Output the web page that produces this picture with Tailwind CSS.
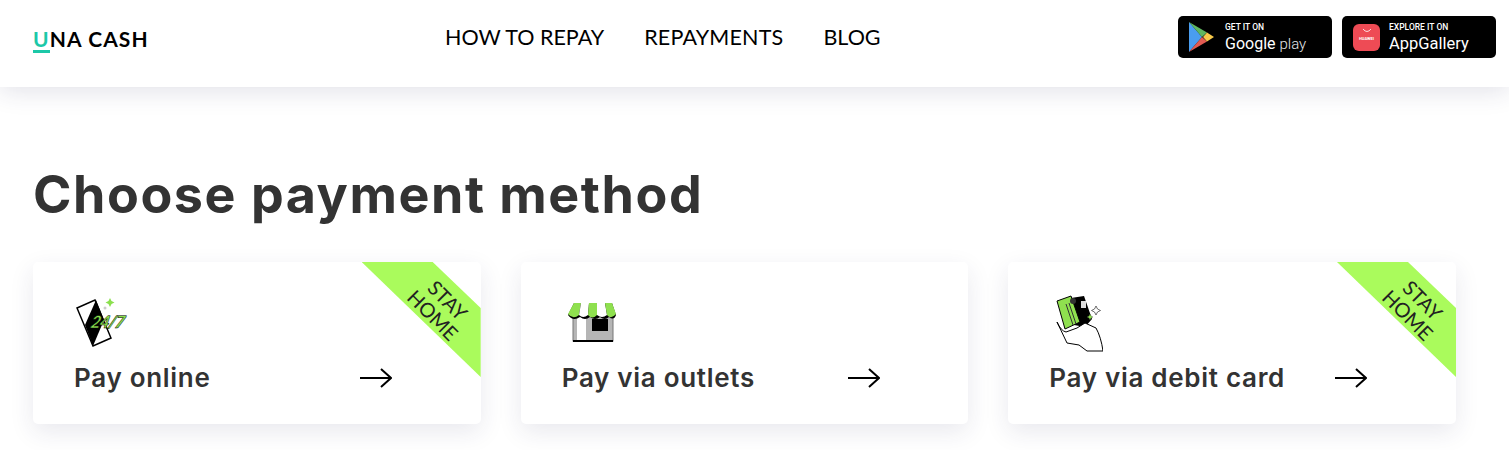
<!DOCTYPE html>
<html><head><meta charset="utf-8">
<script src="https://cdn.jsdelivr.net/npm/@tailwindcss/browser@4"></script>
</head>
<body class="bg-white overflow-hidden font-['Lato',sans-serif]">
<div class="w-[1509px] h-[450px] overflow-hidden">
<header class="h-[87px] bg-white flex items-start shadow-[0_4px_24px_rgba(40,40,90,0.14)] relative">
  <a class="w-[445px] pl-[33px] pt-[26px] text-[21px] leading-[26px] font-bold text-black tracking-[1.1px] font-['Lato',sans-serif] whitespace-nowrap"><span class="text-[#1cc8a8] border-b-[3px] border-[#1cc8a8] inline-block leading-[23px]">U</span>NA CASH</a>
  <nav class="flex gap-10 pt-[24px] text-[21.5px] leading-[26px] text-black whitespace-nowrap">
    <a>HOW TO REPAY</a><a class="tracking-[0.2px]">REPAYMENTS</a><a>BLOG</a>
  </nav>
  <div class="ml-auto flex gap-[10px] pt-[16px] pr-[13px] text-white font-['Roboto',sans-serif]">
    <div class="w-[154px] h-[42px] bg-black rounded-[5px] flex items-center pl-[10px]">
      <svg width="28" height="36" viewBox="0 0 28 36" class="mr-[9px]">
        <path d="M1 3 L14 18 L1 33Z" fill="#4a9df0"/>
        <path d="M1 3 L19 13.5 L14 18Z" fill="#5fb760"/>
        <path d="M1 33 L19 22.5 L14 18Z" fill="#e25b52"/>
        <path d="M19 13.5 L26 18 L19 22.5 L15 18Z" fill="#f7c84a"/>
      </svg>
      <div class="flex flex-col">
        <span class="text-[8.5px] leading-[10px] mt-[1px] font-medium">GET IT ON</span>
        <span class="text-[16px] leading-[20px] mt-[2px] whitespace-nowrap">Google <span class="font-light text-[15px] text-gray-200">play</span></span>
      </div>
    </div>
    <div class="w-[154px] h-[42px] bg-black rounded-[5px] flex items-center pl-[11px]">
      <div class="w-[27px] h-[27px] rounded-[6px] bg-[#ee4b55] mr-[9px] flex flex-col items-center pt-[4px]">
        <svg width="10" height="5" viewBox="0 0 10 5"><path d="M1 1 Q5 6 9 1" stroke="#fff" stroke-width="0.8" fill="none"/></svg>
        <span class="text-[4px] leading-[5px] mt-[3px] font-bold">HUAWEI</span>
      </div>
      <div class="flex flex-col">
        <span class="text-[8.5px] leading-[10px] mt-[1px] font-medium whitespace-nowrap">EXPLORE IT ON</span>
        <span class="text-[16.5px] leading-[20px] mt-[2px] whitespace-nowrap">AppGallery</span>
      </div>
    </div>
  </div>
</header>
<main class="px-[33px]">
  <h1 class="mt-[75px] text-[52px] leading-[66px] font-bold text-[#333] tracking-[1.55px] font-['Inter',sans-serif] whitespace-nowrap">Choose payment method</h1>
  <div class="grid grid-cols-3 gap-10 mt-[34px] w-[1423px]">

    <div class="relative h-[162px] bg-white rounded-[5px] shadow-[0_8px_24px_rgba(40,40,90,0.1)] overflow-hidden pl-[41px] pt-[33px]">
      <div class="absolute top-0 right-0 w-[119px] h-[115px] bg-[#aafb5c] [clip-path:polygon(0_0,71px_0,100%_46px,100%_100%)]"></div>
      <div class="absolute top-[23px] right-[-5px] w-[90px] rotate-45 text-center text-[20px] leading-[21px] text-[#222] pt-[2px]">STAY<br>HOME</div>
      <svg width="54" height="52" viewBox="0 0 54 52" class="block">
        <path d="M3 13 L21 5 L37 43 L19 51Z" fill="#fff" stroke="#000" stroke-width="1.5"/>
        <path d="M22 5 L30 25 L19 51 L11 30Z" fill="#000"/>
        <g transform="skewX(-12)">
          <text x="23" y="33" font-family="Lato" font-style="italic" font-weight="900" font-size="17" fill="#8be04e" stroke="#000" stroke-width="0.5" letter-spacing="-1">24/7</text>
        </g>
        <path d="M36 3l1.500 3 3 1.500-3 1.500-1.500 3-1.500-3-3-1.500 3-1.500z" fill="#8be04e"/>
        <circle cx="31" cy="13" r="1.500" fill="#ccc"/>
      </svg>
      <div class="flex justify-between items-center w-[318px] mt-[11px]">
        <span class="text-[26px] leading-[40px] font-semibold text-[#333] tracking-[0.7px] font-['Inter',sans-serif] whitespace-nowrap">Pay online</span>
        <svg width="32" height="20" viewBox="0 0 32 20"><path d="M0 10H31M21 1l10 9-10 9" fill="none" stroke="#000" stroke-width="2"/></svg>
      </div>
    </div>

    <div class="relative h-[162px] bg-white rounded-[5px] shadow-[0_8px_24px_rgba(40,40,90,0.1)] overflow-hidden pl-[41px] pt-[33px]">
      <svg width="54" height="52" viewBox="0 0 54 52" class="block">
        <rect x="11" y="19" width="40" height="27" fill="#b5b5b5" stroke="#777"/>
        <rect x="15" y="22" width="9" height="24" fill="#fff"/>
        <rect x="30" y="24" width="16" height="12" fill="#000"/>
        <rect x="11" y="45" width="40" height="2" fill="#000"/>
        <path d="M12 8 L6 20 Q11 27 18 22 Q23 26 28 22 Q33 26 38 22 Q43 26 47 22 Q52 26 54 20 L50 8Z" fill="#000"/>
        <path d="M12 8 H19 L17 20 Q11 25 6 19Z" fill="#8fe04f"/>
        <path d="M19 8 H27 L26 20 Q21 24 17 20Z" fill="#fff"/>
        <path d="M27 8 H35 L35 20 Q30 25 26 20Z" fill="#8fe04f"/>
        <path d="M35 8 H43 L45 20 Q40 24 35 20Z" fill="#fff"/>
        <path d="M43 8 H50 L54 19 Q49 25 45 20Z" fill="#8fe04f"/>
      </svg>
      <div class="flex justify-between items-center w-[318px] mt-[11px]">
        <span class="text-[26px] leading-[40px] font-semibold text-[#333] tracking-[0.7px] font-['Inter',sans-serif] whitespace-nowrap">Pay via outlets</span>
        <svg width="32" height="20" viewBox="0 0 32 20"><path d="M0 10H31M21 1l10 9-10 9" fill="none" stroke="#000" stroke-width="2"/></svg>
      </div>
    </div>

    <div class="relative h-[162px] bg-white rounded-[5px] shadow-[0_8px_24px_rgba(40,40,90,0.1)] overflow-hidden pl-[41px] pt-[33px]">
      <div class="absolute top-0 right-0 w-[119px] h-[115px] bg-[#aafb5c] [clip-path:polygon(0_0,71px_0,100%_46px,100%_100%)]"></div>
      <div class="absolute top-[23px] right-[-5px] w-[90px] rotate-45 text-center text-[20px] leading-[21px] text-[#222] pt-[2px]">STAY<br>HOME</div>
      <svg width="54" height="58" viewBox="0 0 54 58" class="block">
        <path d="M22 3 L35 1 L43 24 L36 32 L25 30Z" fill="#000"/>
        <rect x="32" y="6" width="5" height="7" fill="#ddd"/>
        <path d="M8 6 L22 1 L31 27 L16 34Z" fill="#8fe04f" stroke="#000"/>
        <path d="M17 9 L24 30 M20 8 L27 29" stroke="#333" stroke-width="1"/>
        <circle cx="24" cy="6" r="3" fill="#333"/>
        <path d="M8 27 Q12 36 17 37 L28 33 L36 28 L47 33 Q52 42 54 56 H38 L30 50 L18 48Z" fill="#fff" stroke="#000"/>
        <path d="M47 11l1.500 3 3 1.500-3 1.500-1.500 3-1.500-3-3-1.500 3-1.500z" fill="#fff" stroke="#333" stroke-width="0.7"/>
        <path d="M41 19l1 2 2 1-2 1-1 2-1-2-2-1 2-1z" fill="#8fe04f" stroke="#333" stroke-width="0.3"/>
      </svg>
      <div class="flex justify-between items-center w-[318px] mt-[5px]">
        <span class="text-[26px] leading-[40px] font-semibold text-[#333] tracking-[0.7px] font-['Inter',sans-serif] whitespace-nowrap">Pay via debit card</span>
        <svg width="32" height="20" viewBox="0 0 32 20"><path d="M0 10H31M21 1l10 9-10 9" fill="none" stroke="#000" stroke-width="2"/></svg>
      </div>
    </div>
  </div>
</main>
</div>
</body></html>
